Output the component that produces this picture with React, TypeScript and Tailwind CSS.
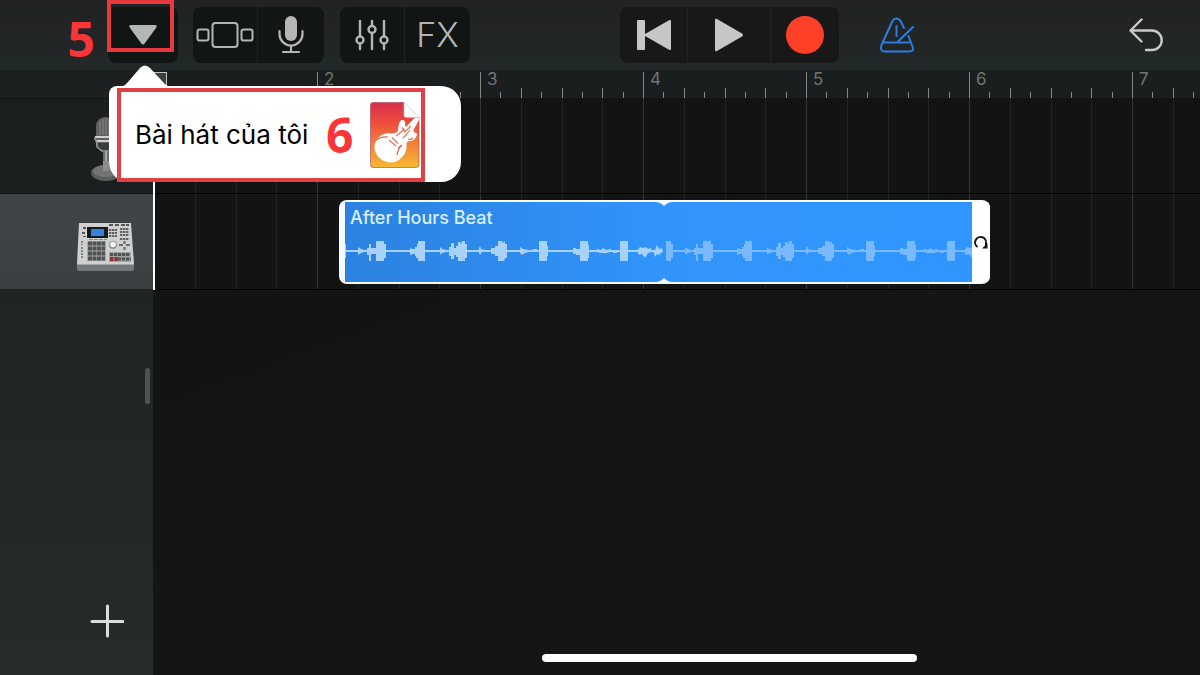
import { ReactNode } from 'react'
import clsx from 'clsx'

const BARS = [1, 2, 3, 4, 5, 6, 7]
const EIGHTHS = [0, 1, 2, 3, 4, 5, 6, 7]
const QUARTERS = [0, 1, 2, 3]

// One loop of the beat, centred on y = 12: the base line, the hits, then the small noise around them
const WAVE = [
  'M-6 11h324v2h-324z',
  'M-6 2h5v20h-5z M-1 5h2v14h-2z',
  'M31 2h8v3h2v14h-2v3h-8z',
  'M73 2h7v20h-7v-3h-2v-2h-1v-9h2v-3h1z',
  'M113 3h2l1 2l1-3h3v3h2v14h-2v3h-7v-4h-2v-11h2z',
  'M153 2h4l1 2l2-2v3h2v14h-2l-1 3h-6z',
  'M194 2h8v5h1v10h-1v5h-8z',
  'M235 2h8v4h1v13h-1v3h-8z',
  'M275 2h8v20h-8z',
  'M13 8l3 2l3 1v2l-3 1l-3 2z M22 9h2v-4h2v4h5v6h-5v7h-2v-6h-2z',
  'M65 9l3 1h3v5h-3l-3 1z',
  'M95 8l2 2l5 1v2l-5 1l-2 2z M104 8h2v-4h3v5h4v7h-4v4h-3v-3h-2z',
  'M133 12l2-5l1 3l4 1v2h-3l-2 3z M146 9h4v-2h3v10h-3v-2h-4z',
  'M175 8l3 2l6 1v2l-4 1l-3 2l-2-2z M188 10h4v3h-4z',
  'M228 9h3v1h4v6h-4v-1h-3z',
  'M252 10l4 1l2-2l3 2l5-1v3l-5 1h-5l-4-1z M268 11h4v3h-4z',
  'M292 12l3-4l3 1l3-1l2 2l3-1v4l-3 1l-3 5l-3-4l-3 1z M307 12l3-1l2-5l2 4l3-1v4l-3 3l-2-1l-2 3l-1-4z',
].join(' ')

function ToolButton({ label, className, children }: { label: string; className?: string; children: ReactNode }) {
  return (
    <button
      type="button"
      aria-label={label}
      className={clsx('flex h-14 items-center justify-center text-[#b4b6b6]', className)}
    >
      {children}
    </button>
  )
}

function MidiController() {
  return (
    <svg width="60" height="52" viewBox="0 0 60 52" aria-hidden="true">
      <path d="M1 43h57v5q0 2-2 2H3q-2 0-2-2z" fill="#74787a" />
      <path d="M3 2h52l3 41H1z" fill="#d0d0cf" />
      <path d="M1 43.500h57" stroke="#a5a8a9" />
      <rect x="11" y="6" width="21" height="11" fill="#15181c" />
      <rect x="15" y="8" width="13" height="7" fill="#3484dc" />
      <g fill="#55585a">
        <rect x="7" y="6" width="3" height="2" />
        <rect x="6" y="11" width="3" height="2" />
        <rect x="7" y="15" width="3" height="1" />
        <rect x="33" y="3" width="4" height="2" />
        <rect x="39" y="3" width="4" height="2" />
        <rect x="45" y="3" width="4" height="2" />
        <rect x="50" y="3" width="3" height="2" />
      </g>
      <path d="M6 20v4M6 26v11" stroke="#85888a" strokeWidth="2" strokeDasharray="2 1" />
      <path d="M13 18.500h18" stroke="#85888a" strokeDasharray="4 1" />
      <path d="M33 9h8M33 12h8M33 15h8M44 8h9M44 11h9M44 14h9M44 18h9" stroke="#5f6264" strokeWidth="2" strokeDasharray="2.300 .6" />
      <rect x="11" y="20" width="19" height="20" fill="#a9acad" />
      <path d="M12 22.500h17M12 27.500h17M12 32.500h17M12 37.500h17" stroke="#505355" strokeWidth="4" strokeDasharray="4 .5" />
      <circle cx="37" cy="24" r="4" fill="#909396" />
      <circle cx="37" cy="23.500" r="2.800" fill="#f6f6f6" />
      <path d="M43 24h4M50 24h4M48.500 20v3M48.500 26v3" stroke="#6b6e70" strokeWidth="2.200" />
      <rect x="33" y="31" width="22" height="10" fill="#a0a3a4" />
      <path d="M34 33.500h20M42 38h13" stroke="#4f5255" strokeWidth="3" strokeDasharray="3.200 .8" />
      <path d="M34 38h8" stroke="#8f2e35" strokeWidth="4" strokeDasharray="3.500 .8" />
    </svg>
  )
}

function StudioMic() {
  return (
    <svg width="32" height="64" viewBox="0 0 32 64" aria-hidden="true">
      <rect x="5" y="0" width="19" height="34" rx="9" fill="#5f6060" />
      <path d="M9 4v14M12 2v16M15 1v17M18 2v16M21 4v14" stroke="#858686" strokeWidth="1" />
      <path d="M4 20h21M6 24h18" stroke="#cfcfcf" strokeWidth="2" />
      <path d="M7 26h16v6l-5 4h-6l-5-4z" fill="#3b3c3c" />
      <path d="M4 20v2q2 2 2 8l5 4h8l4-4q1-6 2-8" fill="none" stroke="#9b9b9b" strokeWidth="1.500" />
      <path d="M12 34h6v18h-6z" fill="#6b6c6c" />
      <path d="M15 34v18" stroke="#a8a8a8" strokeWidth="2" />
      <ellipse cx="15" cy="56" rx="15" ry="8" fill="#5c5d5d" />
      <ellipse cx="15" cy="54" rx="13" ry="6" fill="#737474" />
      <path d="M12 44h6v10h-6z" fill="#8b8c8c" />
    </svg>
  )
}

function SongFile() {
  return (
    <svg width="50" height="66" viewBox="0 0 50 66" aria-hidden="true">
      <defs>
        <linearGradient id="song" x1="0" y1="0" x2="0" y2="1">
          <stop offset="0" stopColor="#d8304a" />
          <stop offset="0.3" stopColor="#ed4b3c" />
          <stop offset="0.65" stopColor="#f1843a" />
          <stop offset="1" stopColor="#f7b92f" />
        </linearGradient>
      </defs>
      <path d="M3 .5h31v15h15v47q0 3-3 3H3q-2.500 0-2.500-3V3Q.5.5 3 .5z" fill="url(#song)" stroke="#a85467" strokeWidth=".7" />
      <path d="M34 .5v12q0 3 3 3h12z" fill="#fff" stroke="#c9b9bd" strokeWidth=".7" />
      <path
        d="M36 25L44 16.500q1.500-1 3-.8l2 .3v2L44 27q-1.500 2.500 1 3.500q3.500 1 1 4.500q-2 4-6 4q-4 0-3.500 4q.5 7-3.500 11q-5 6-11 6.500q-9 0-14-6q-5-6-3-13q2-7 9-9.500q4-1.200 8-.5q5 0 6-3q0-3 1-6.500q1-4.500 4-4q3 1 2 5z"
        fill="#fff"
      />
      <path d="M29 32l4-4 2 2 6-6M33 36l4-4M32 25.500l3 3M40 28l-4 5M26 34l4-3M19 38l7 6M22 35.500l6 6M38 37q3 1 5-1" fill="none" stroke="#dc7761" strokeWidth="1.200" />
      <path d="M6 38q6-4 12-3M27 53q1-6 5-10l-4 3" fill="none" stroke="#cf7154" strokeWidth="1.200" />
    </svg>
  )
}

function GridLines() {
  return (
    <div className="absolute inset-0 flex overflow-hidden">
      {BARS.map((bar) => (
        <div key={bar} className="grid w-[163px] shrink-0 grid-cols-4">
          {QUARTERS.map((q) => (
            <div key={q} className={clsx('border-l', q === 0 ? 'border-[#353736]' : 'border-[#222423]')} />
          ))}
        </div>
      ))}
    </div>
  )
}

function SongMenu() {
  return (
    <div className="absolute top-[58px] left-px z-20 w-[352px]">
      <svg width="50" height="22" viewBox="0 0 50 22" className="ml-3" aria-hidden="true">
        <path d="M0 22Q4 21 7 17L19 3q5-5 10 0l13 14q3 4 8 5z" fill="#fff" />
      </svg>
      <div className="-mt-px rounded-[20px] rounded-tl-lg bg-white pl-2">
        <div className="pt-0.5">
          <div className="flex h-[94px] w-[308px] items-center border-4 border-[#e04145] pl-[14px]">
            <button type="button" className="flex items-center text-black">
              <span className="w-[191px] text-left text-[26px] leading-8 whitespace-nowrap">Bài hát của tôi</span>
              <span className="w-11 text-left font-['Open_Sans'] text-5xl leading-none font-bold text-[#fb3538]">6</span>
              <SongFile />
            </button>
          </div>
        </div>
      </div>
    </div>
  )
}

function Toolbar() {
  const group = 'flex divide-x divide-[#1e2222] rounded-lg bg-[#111615]'
  return (
    <header className="flex h-[70px] items-center bg-linear-to-b from-[#222222] to-[#222829] pr-[37px]">
      <span className="w-[108px] pt-2 pr-[13px] text-right font-['Open_Sans'] text-5xl leading-none font-bold text-[#fb3538]">
        5
      </span>
      <div className="relative">
        <ToolButton label="Menu" className="w-[70px] rounded-lg bg-[#111615]">
          <svg width="28" height="20" viewBox="0 0 28 20">
            <path d="M2 0h24q3 0 1 3L16 18q-2 3-4 0L1 3q-2-3 1-3z" fill="currentColor" />
          </svg>
        </ToolButton>
        <div className="absolute -top-[7px] -left-px h-[52px] w-[67px] border-4 border-[#e8393e]" />
        <SongMenu />
      </div>
      <div className={clsx(group, 'ml-[15px]')}>
        <ToolButton label="Browser" className="w-[65px]">
          <svg width="58" height="28" viewBox="0 0 58 28" fill="none" stroke="currentColor" strokeWidth="2">
            <rect x="1.500" y="8.500" width="11" height="11" rx="2" />
            <rect x="16.500" y="2" width="25" height="24" rx="3" />
            <rect x="45.500" y="8.500" width="11" height="11" rx="2" />
          </svg>
        </ToolButton>
        <ToolButton label="Microphone" className="w-[66px]">
          <svg width="26" height="38" viewBox="0 0 26 38" fill="none" stroke="currentColor" strokeWidth="2.200" strokeLinecap="round">
            <rect x="7" y="0" width="12" height="25" rx="6" fill="currentColor" stroke="none" />
            <path d="M1.500 15v3a11.500 11.500 0 0 0 23 0v-3M13 29.500V36M5 36h16" />
          </svg>
        </ToolButton>
      </div>
      <div className={clsx(group, 'ml-4')}>
        <ToolButton label="Track controls" className="w-[65px]">
          <svg width="34" height="32" viewBox="0 0 34 32" fill="none" stroke="currentColor" strokeWidth="2.400" strokeLinecap="round">
            <path d="M5 2v15M5 25v5M17 2v4M17 14v16M29 2v15M29 25v5" />
            <circle cx="5" cy="21" r="3.500" />
            <circle cx="17" cy="10.500" r="3.500" />
            <circle cx="29" cy="21" r="3.500" />
          </svg>
        </ToolButton>
        <ToolButton label="Effects" className="w-[65px]">
          <span className="text-[34px] leading-none font-light">FX</span>
        </ToolButton>
      </div>
      <div className="ml-[150px] flex divide-x divide-[#232323] rounded-lg bg-[#181818]">
        <ToolButton label="Go to beginning" className="w-[68px]">
          <svg width="34" height="30" viewBox="0 0 34 30" fill="#c6c6c6">
            <rect x="0" y="0" width="8" height="30" rx="1" />
            <path d="M32 .3Q34-.5 34 1v28q0 1.500-2 .7L8 16q-1-1 0-2z" />
          </svg>
        </ToolButton>
        <ToolButton label="Play" className="w-[83px]">
          <svg width="28" height="34" viewBox="0 0 28 34" fill="#c6c6c6">
            <path d="M0 2Q0 0 2 1l25 14.500q2 1.500 0 3L2 33q-2 1-2-1z" />
          </svg>
        </ToolButton>
        <ToolButton label="Record" className="w-[68px]">
          <span className="size-[38px] rounded-full bg-[#ff4029]" />
        </ToolButton>
      </div>
      <ToolButton label="Metronome" className="ml-10">
        <svg width="36" height="36" viewBox="0 0 36 36" fill="none" stroke="#2b7ee0" strokeWidth="2" strokeLinecap="round" strokeLinejoin="round">
          <path d="M25 11L21.500 4q-1.500-2.500-4-2.500T13.500 4L2.500 28q-2 6 3 6.500h25q5 0 3-5L29.500 19M5 25.500h25M17.500 9v10M34 10L18.500 25" />
        </svg>
      </ToolButton>
      <ToolButton label="Undo" className="ml-auto">
        <svg width="34" height="34" viewBox="0 0 34 34" fill="none" stroke="#c9c9c9" strokeWidth="2.400" strokeLinecap="round" strokeLinejoin="round">
          <path d="M12.500 1.500L1.500 12.500l11 11M2 12.500h21a9.700 9.700 0 0 1 0 19.500h-6" />
        </svg>
      </ToolButton>
    </header>
  )
}

function Sidebar() {
  return (
    <aside className="flex w-[153px] shrink-0 flex-col bg-linear-to-b from-[#1d2021] to-[#272b2a]">
      <div className="h-7" />
      <div className="flex h-24 items-end border-y border-[#111313] bg-[#1b1f20] pb-3 pl-[91px]">
        <StudioMic />
      </div>
      <div className="flex h-24 items-center border-b border-[#1b1d1e] bg-linear-to-b from-[#424547] to-[#3b3f41] pt-2.5 pl-[76px]">
        <MidiController />
      </div>
      <div className="flex flex-1 flex-col pt-[78px]">
        <div className="mr-[3px] h-9 w-[5px] self-end rounded-full bg-[#4e5253]" />
        <button type="button" aria-label="Add track" className="mt-auto mb-[37px] ml-[90px] self-start text-[#dcdedd]">
          <svg width="34" height="34" viewBox="0 0 34 34" stroke="currentColor" strokeWidth="3" strokeLinecap="round">
            <path d="M17.500 2v30M2 17.500h31" />
          </svg>
        </button>
      </div>
    </aside>
  )
}

function Ruler() {
  return (
    <div className="relative flex h-7 overflow-hidden bg-[#1a1e1e] pl-px text-[17px] leading-[18px] text-[#707473]">
      {BARS.map((bar) => (
        <div key={bar} className="relative grid w-[163px] shrink-0 grid-cols-8 items-end">
          {EIGHTHS.map((n) => (
            <div
              key={n}
              className={clsx('border-l border-[#858887]', n === 0 ? 'h-[26px]' : n % 2 === 0 ? 'h-2.5' : 'h-1.5')}
            />
          ))}
          {bar > 1 && <span className="absolute top-0 left-[7px]">{bar}</span>}
        </div>
      ))}
      <div className="absolute top-0.5 left-0 size-[14px] border border-[#c5c8c7] bg-[#3c4040]" />
    </div>
  )
}

function Region() {
  return (
    <div className="absolute top-1.5 left-[185px] flex h-[84px] w-[651px] overflow-hidden rounded-lg bg-[#f4faff] py-0.5 pl-1.5">
      <div className="relative w-[627px] bg-linear-to-r from-[#2c82e0] via-[#3094fb] to-[#3096ff]">
        <h2 className="pt-1 pl-[5px] text-lg leading-6 font-medium text-[#d9efff]">After Hours Beat</h2>
        <svg width="627" height="24" viewBox="0 0 627 24" className="mt-[9px]" aria-hidden="true">
          <svg width="318" height="24">
            <path d={WAVE} fill="#a9d2fa" />
          </svg>
          <path d={WAVE} fill="#79baff" transform="translate(327 0)" />
        </svg>
        <svg width="18" height="5" viewBox="0 0 18 5" className="absolute top-0 left-[310px]" fill="#f4faff">
          <path d="M1 0h16q-4 0-8 4q-4-4-8-4z" />
        </svg>
        <svg width="18" height="5" viewBox="0 0 18 5" className="absolute bottom-0 left-[310px]" fill="#f4faff">
          <path d="M1 5h16q-4 0-8-4q-4 4-8 4z" />
        </svg>
      </div>
      <button type="button" aria-label="Loop" className="flex flex-1 items-center justify-center bg-white">
        <svg width="16" height="15" viewBox="0 0 16 15" fill="none" stroke="#161616" strokeWidth="2">
          <path d="M4.500 12A5.500 5.500 0 1 1 13 8.500V13" />
          <path d="M9 13.500h5.500V8z" fill="#161616" stroke="none" />
        </svg>
      </button>
    </div>
  )
}

function Timeline() {
  return (
    <main className="flex min-w-0 flex-1 flex-col">
      <Ruler />
      <div className="flex h-24 border-b border-black bg-[#121413] pl-px">
        <div className="relative flex-1">
          <GridLines />
          <div className="absolute -bottom-px -left-px h-[83px] w-0.5 bg-white" />
        </div>
      </div>
      <div className="flex h-24 border-b border-black bg-[#121413] pl-px">
        <div className="relative flex-1">
          <GridLines />
          <Region />
          <div className="absolute top-0 -left-px h-24 w-0.5 bg-white" />
        </div>
      </div>
      <div className="flex flex-1 items-end bg-[#151515] bg-linear-to-br from-[#111413] to-[#151515] to-40% pb-[13px] pl-[389px]">
        <div className="h-2 w-[375px] rounded-full bg-white" />
      </div>
    </main>
  )
}

export default function App() {
  return (
    <div className="flex min-h-screen flex-col overflow-hidden bg-[#151515] font-['Inter',sans-serif]">
      <Toolbar />
      <div className="flex flex-1">
        <Sidebar />
        <Timeline />
      </div>
    </div>
  )
}
